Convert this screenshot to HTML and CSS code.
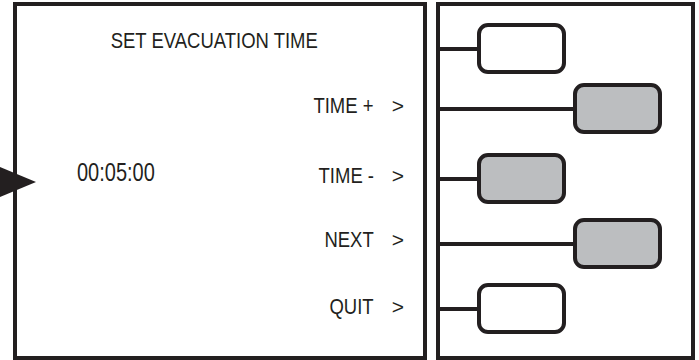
FILE: index.html
```html
<!DOCTYPE html>
<html>
<head>
  <title>Set Evacuation Time</title>
  <link rel="stylesheet" href="styles.css">
</head>
<body>
  <svg class="pointer" width="36" height="30" viewBox="0 0 36 30">
    <polygon points="0,0 36,15 0,30" fill="#231f20"/>
  </svg>

  <main class="device">
    <section class="screen">
      <h1 class="title"><span class="narrow">SET EVACUATION TIME</span></h1>
      <div class="screen-body">
        <div class="time"><span class="narrow">00:05:00</span></div>
        <ul class="menu">
          <li><span class="narrow">TIME +</span><span class="chev">&gt;</span></li>
          <li><span class="narrow">TIME -</span><span class="chev">&gt;</span></li>
          <li><span class="narrow">NEXT</span><span class="chev">&gt;</span></li>
          <li><span class="narrow">QUIT</span><span class="chev">&gt;</span></li>
        </ul>
      </div>
    </section>

    <section class="keys">
      <div class="key near"><span class="wire"></span><span class="btn"></span></div>
      <div class="key far"><span class="wire"></span><span class="btn on"></span></div>
      <div class="key near"><span class="wire"></span><span class="btn on"></span></div>
      <div class="key far"><span class="wire"></span><span class="btn on"></span></div>
      <div class="key near"><span class="wire"></span><span class="btn"></span></div>
    </section>
  </main>
</body>
</html>
```

FILE: styles.css
```css
body {
  margin: 0;
  background: #fff;
  color: #231f20;
  font-family: "Liberation Sans", Arial, sans-serif;
}

/* the panel font is a condensed grotesk */
.narrow {
  display: inline-block;
  transform: scaleX(0.84);
}

.pointer {
  position: absolute;
  left: 0;
  top: 167px;
  z-index: 2;
}

.device {
  display: flex;
  gap: 9px;
  padding: 2px 0 0 13px;
}

.screen,
.keys {
  box-sizing: border-box;
  height: 358px;
  border: 4px solid #231f20;
}

.screen {
  width: 414px;
}

.keys {
  width: 259px;
  display: flex;
  flex-direction: column;
  gap: 14px;
  padding-top: 17px;
}

/* left screen */
.title {
  margin: 23px 12px 0 0;
  font-size: 22px;
  font-weight: normal;
  line-height: 24px;
  text-align: center;
}

.screen-body {
  display: flex;
  margin-top: 41px;
  padding: 0 19px 0 60px;
}

.time {
  margin-top: 64px;
  font-size: 25px;
  line-height: 28px;
}

.time .narrow {
  transform: scaleX(0.8);
  transform-origin: left center;
}

.menu {
  list-style: none;
  margin: 0 0 0 auto;
  padding: 0;
  display: flex;
  flex-direction: column;
  align-items: flex-end;
  gap: 43px;
  font-size: 22px;
  line-height: 24px;
}

.menu li {
  display: flex;
  gap: 18px;
}

.menu li:nth-child(2) {
  margin-top: 3px;
}

.menu li:nth-child(3) {
  margin-top: -3px;
}

.menu .narrow {
  transform-origin: right center;
}

.chev {
  font-size: 21px;
}

/* right keypad */
.key {
  display: flex;
  align-items: center;
  height: 51px;
}

.key:nth-child(2) {
  margin-top: -5px;
}

.key:nth-child(3) {
  margin-top: 5px;
}

.wire {
  height: 4px;
  background: #231f20;
}

.near .wire {
  width: 37px;
}

.far .wire {
  width: 133px;
}

.btn {
  box-sizing: border-box;
  width: 89px;
  height: 51px;
  border: 4px solid #231f20;
  border-radius: 11px;
  background: #fff;
}

.btn.on {
  background: #bcbec0;
}
```
